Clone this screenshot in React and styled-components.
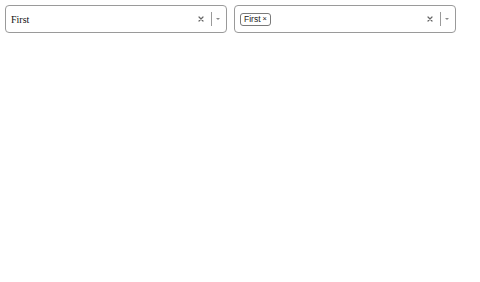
import React from 'react';
import styled, { createGlobalStyle } from 'styled-components';

const GlobalStyle = createGlobalStyle`
  html, body {
    margin: 0;
    background: #fff;
  }
`;

const Page = styled.div`
  display: flex;
  gap: 7px;
  padding: 5px;
`;

const SelectBox = styled.div`
  box-sizing: border-box;
  display: flex;
  align-items: center;
  width: 222px;
  height: 28px;
  border: 1px solid #9a9a9a;
  border-radius: 4px;
  padding: 0 6px 0 5px;
  background: #fff;
`;

const Value = styled.div`
  flex: 1;
  display: flex;
  align-items: center;
  font-family: "Liberation Serif", "Times New Roman", serif;
  font-size: 10px;
  color: #111;
`;

const Chip = styled.span`
  display: inline-flex;
  align-items: center;
  gap: 2px;
  height: 13px;
  box-sizing: border-box;
  padding: 0 3px 0 3px;
  border: 1px solid #7a7a7a;
  border-radius: 3px;
  font-family: "Liberation Sans", Arial, sans-serif;
  font-size: 8.5px;
  color: #222;
`;

const ChipRemove = styled.span`
  font-size: 7.5px;
  line-height: 1;
`;

const Clear = styled.span`
  display: flex;
  width: 6px;
  height: 6px;
  margin-right: 7px;
`;

const Separator = styled.span`
  width: 1px;
  height: 14px;
  background: #9a9a9a;
  margin-right: 4px;
`;

const Arrow = styled.span`
  width: 0;
  height: 0;
  border-left: 2.5px solid transparent;
  border-right: 2.5px solid transparent;
  border-top: 2.5px solid #8a8a8a;
`;

const ClearIcon = () => (
  <Clear>
    <svg width="6" height="6" viewBox="0 0 6 6">
      <path d="M1 1L5 5M5 1L1 5" stroke="#666" strokeWidth="1.2" strokeLinecap="round" />
    </svg>
  </Clear>
);

const Select = ({ children }) => (
  <SelectBox>
    <Value>{children}</Value>
    <ClearIcon />
    <Separator />
    <Arrow />
  </SelectBox>
);

export default function App() {
  return (
    <>
      <GlobalStyle />
      <Page>
        <Select>First</Select>
        <Select>
          <Chip>
            First
            <ChipRemove>×</ChipRemove>
          </Chip>
        </Select>
      </Page>
    </>
  );
}
